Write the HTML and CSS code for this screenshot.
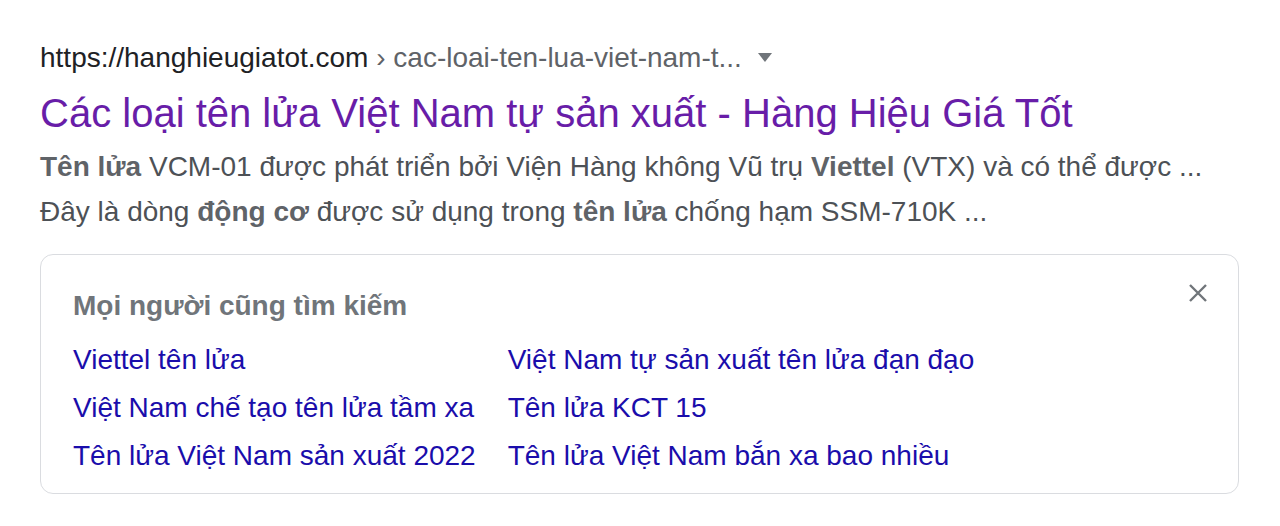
FILE: index.html
```html
<!DOCTYPE html>
<html lang="vi">
<head>
<meta charset="utf-8">
<link rel="stylesheet" href="styles.css">
</head>
<body>
<div class="result">
  <div class="url">
    <span class="site">https://hanghieugiatot.com</span><span class="path"> › cac-loai-ten-lua-viet-nam-t...</span>
    <svg class="caret" width="14" height="9" viewBox="0 0 14 9"><path d="M0 0h14L7 9z" fill="#70757a"/></svg>
  </div>
  <a class="title" href="#">Các loại tên lửa Việt Nam tự sản xuất - Hàng Hiệu Giá Tốt</a>
  <div class="snippet">
    <div><b>Tên lửa</b> VCM-01 được phát triển bởi Viện Hàng không Vũ trụ <b>Viettel</b> (VTX) và có thể được ...</div>
    <div>Đây là dòng <b>động cơ</b> được sử dụng trong <b>tên lửa</b> chống hạm SSM-710K ...</div>
  </div>
  <div class="also">
    <div class="also-head">
      <span class="also-title">Mọi người cũng tìm kiếm</span>
      <svg class="close" width="18" height="18" viewBox="0 0 18 18"><path d="M1 1L17 17M17 1L1 17" stroke="#70757a" stroke-width="2.4"/></svg>
    </div>
    <div class="links">
      <a href="#">Viettel tên lửa</a>
      <a href="#">Việt Nam tự sản xuất tên lửa đạn đạo</a>
      <a href="#">Việt Nam chế tạo tên lửa tầm xa</a>
      <a href="#">Tên lửa KCT 15</a>
      <a href="#">Tên lửa Việt Nam sản xuất 2022</a>
      <a href="#">Tên lửa Việt Nam bắn xa bao nhiều</a>
    </div>
  </div>
</div>
</body>
</html>
```

FILE: styles.css
```css
html, body {
  margin: 0;
  background: #fff;
}
body {
  font-family: "Liberation Sans", Arial, sans-serif;
}
.result {
  padding: 40px 41px 0 40px;
}
.url {
  display: flex;
  align-items: center;
  height: 36px;
  font-size: 28px;
  line-height: 36px;
  white-space: pre;
}
.site {
  color: #202124;
}
.path {
  color: #5f6368;
}
.caret {
  margin-left: 16px;
  margin-bottom: 2px;
}
.title {
  display: block;
  margin-top: 11px;
  font-size: 40px;
  line-height: 52px;
  color: #681da8;
  text-decoration: none;
}
.snippet {
  margin-top: 5px;
  font-size: 28px;
  line-height: 45px;
  color: #4d5156;
}
.snippet b {
  color: #5f6368;
}
.also {
  margin-top: 20px;
  border: 1.5px solid #dadce0;
  border-radius: 13px;
  padding: 31px 32px 13px 32px;
}
.also-head {
  display: flex;
  justify-content: space-between;
  align-items: flex-start;
  height: 40px;
}
.also-title {
  font-size: 28px;
  line-height: 40px;
  font-weight: bold;
  color: #70757a;
}
.close {
  margin-top: -2px;
  margin-right: -1px;
}
.links {
  display: grid;
  grid-template-columns: auto auto;
  justify-content: start;
  column-gap: 32px;
  margin-top: 10px;
}
.links a {
  font-size: 28px;
  line-height: 48px;
  color: #1a0dab;
  text-decoration: none;
}
```
